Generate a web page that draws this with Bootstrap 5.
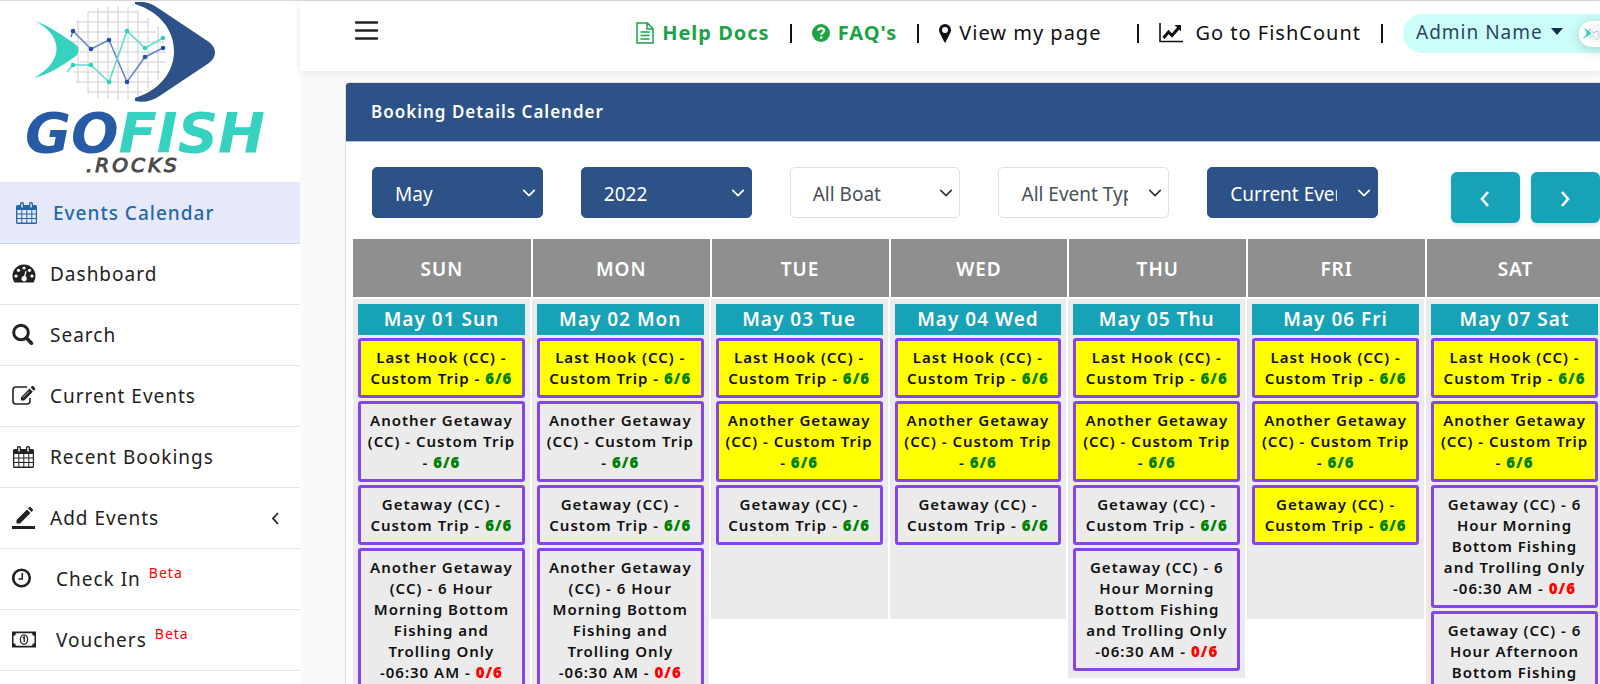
<!DOCTYPE html>
<html lang="en">
<head>
<meta charset="utf-8">
<meta name="viewport" content="width=device-width, initial-scale=1">
<title>Booking Details Calender</title>
<link rel="stylesheet" href="https://cdn.jsdelivr.net/npm/bootstrap@5.3.0/dist/css/bootstrap.min.css">
<style>
  :root { --navy: #2d5287; --teal: #17a2b8; --aqua: #35d2c2; }
  body { font-family: "Noto Sans", "Open Sans", sans-serif; font-size: 19px; letter-spacing: 1px; color: #222; background: #fafafa; overflow-x: hidden; }
  a { text-decoration: none; color: inherit; }
  .shell { border-top: 1px solid #d9d9d9; }
  .side { width: 300px; min-height: 100vh; background: #fff; }
  .brand { height: 182px; border-bottom: 1px solid #e6e6ea; }
  .brand svg { display: block; }
  .side-link { height: 61px; border-bottom: 1px solid #e4e4e4; padding-left: 12px; }
  .side-link svg { width: 24px; height: 24px; flex: none; margin-right: 14px; }
  .side-link.wide svg { margin-right: 20px; }
  .side-link.active { background: #e6e9fa; color: #2467a8; font-weight: 500; padding-left: 15px; border-color: #d3d7ea; }
  .side-link sup { color: #f00; font-size: 14px; top: -6px; margin-left: 8px; }
  .topbar { height: 70px; background: #fff; box-shadow: 0 2px 8px rgba(0,0,0,.08); padding-left: 54px; }
  .menu-btn { margin-bottom: 11px; }
  .top-links { color: #111; font-size: 20px; padding-bottom: 6px; }
  .help { color: #1ca345; font-weight: 700; }
  .sep { width: 2px; height: 19px; background: #111; margin: 0 20px; }
  .pill { width: 197px; height: 39px; border: 0; border-radius: 20px 0 0 20px; background: #ccfffa; color: #2b4560; font-size: 19px; letter-spacing: 1px; padding: 0 0 2px 13px; }
  .avatar { width: 44px; height: 26px; border-radius: 13px; background: #fff; box-shadow: 0 2px 14px rgba(0,0,0,.2); }
  .stage { padding: 11px 0 0 45px; margin-right: -14px; }
  .booking { border-radius: 4px; border-color: #dcdcdc; }
  .booking .card-header { background: var(--navy); color: #fff; font-size: 17px; font-weight: 600; line-height: 26px; padding: 16px 25px; border-radius: 3px 3px 0 0; border-bottom-color: #b5c3d8; }
  .booking .card-body { padding: 25px 7px 0; }
  .filters > div { padding: 0 19px; }
  .filters > .steps { padding: 5px 6px 0 0; gap: 11px; }
  .pick { height: 51px; font-size: 19px; padding: 3px 40px 0 22px; border-color: #dee2e6; color: #495057; border-radius: 5px; background-position: right 6px center; background-size: 14px 14px; }
  .pick.solid { color: #fff; background-color: var(--navy); border-color: var(--navy);
    background-image: url("data:image/svg+xml,%3csvg xmlns='http://www.w3.org/2000/svg' viewBox='0 0 16 16'%3e%3cpath fill='none' stroke='%23fff' stroke-linecap='round' stroke-linejoin='round' stroke-width='2' d='m2 5 6 6 6-6'/%3e%3c/svg%3e"); }
  .step { width: 69px; height: 51px; background: var(--teal); color: #fff; border: 0; border-radius: 6px; box-shadow: 0 2px 4px rgba(0,0,0,.12); }
  .cal { table-layout: fixed; margin-top: 16px; }
  .cal th { height: 59px; background: #8f8f8f; background-clip: padding-box; color: #fff; font-weight: 600; border-right: 2px solid #fff; border-bottom: 2px solid #fff; padding-top: 3px; }
  .cal td { vertical-align: top; padding: 0 2px 0 0; }
  .day { background: #ebebeb; min-height: 320px; padding: 5px 5px 7px; }
  .day h2 { background: var(--teal); color: #fff; font-size: 19px; font-weight: 600; line-height: 31px; margin: 0; }
  .ev { display: block; border: 3px solid #8545ea; border-radius: 3px; margin-top: 3px; padding: 6px 5px; font-size: 15px; font-weight: 600; line-height: 21px; color: #111; }
  .ev.hot { background: #ff0; }
  .ev b { font-weight: 900; color: #008000; }
  .ev b.none { color: #f00; }
</style>
</head>
<body>
<svg class="d-none">
  <symbol id="cal" viewBox="0 0 24 24"><path fill="currentColor" fill-rule="evenodd" d="M3 4h2V2.500a1.500 1.500 0 0 1 1.500-1.500h1a1.500 1.500 0 0 1 1.500 1.500V4h5V2.500A1.500 1.500 0 0 1 15.500 1h1A1.500 1.500 0 0 1 18 2.500V4h2.500A1.500 1.500 0 0 1 22 5.500v16a1.500 1.500 0 0 1-1.500 1.500h-18A1.500 1.500 0 0 1 1 21.500v-16A1.500 1.500 0 0 1 2.500 4zM2.300 9v3.600h4V9zm5 0v3.600h4V9zm5 0v3.600h4V9zm5 0v3.600h3.500V9zm-15 4.600v3.500h4v-3.500zm5 0v3.500h4v-3.500zm5 0v3.500h4v-3.500zm5 0v3.500h3.500v-3.500zm-15 4.500v3.500h4v-3.500zm5 0v3.500h4v-3.500zm5 0v3.500h4v-3.500zm5 0v3.500h3.500v-3.500zM6.300 2.500v4h1.400v-4zm9 0v4h1.400v-4z"/></symbol>
  <symbol id="fish" viewBox="0 0 190 105">
    <g fill="none" stroke="#dedee2" stroke-width="1.500"><path d="M44 18v62M54 10v82M64 6v90M74 5v92M84 4v94M94 5v92M104 8v86M114 16v70M124 24v54M54 10h50M42 20h72M38 30h84M36 40h94M46 50h86M46 60h86M40 70h86M42 80h76M54 90h54"/></g>
    <path d="M1 19c16 6 27 14 40 23 4 3 5 8 1 12C29 63 16 72 0 76c32-18 28-43 1-57z" fill="#35d2c2"/>
    <path d="M101 0c9-1 16 1 23 6l51 34c8 6 8 15 0 21l-51 34c-7 4-14 6-23 4v-3c52-16 52-78 0-94z" fill="#2d5287"/>
    <g fill="none" stroke-width="1.600"><path stroke="#6b85c4" d="M37 35l2-6 18 18 18-9 18 42 18-25 18-9"/><path stroke="#62dccf" d="M33 70l6-7h18l18 17 18-51 18 17 18-10"/></g>
    <g fill="#1d53a6"><circle cx="39" cy="29" r="2.300"/><circle cx="57" cy="47" r="2.300"/><circle cx="75" cy="38" r="2.300"/><circle cx="93" cy="80" r="2.300"/><circle cx="111" cy="55" r="2.300"/><circle cx="129" cy="46" r="2.300"/></g>
    <g fill="#2ed1c1"><circle cx="39" cy="63" r="2.300"/><circle cx="57" cy="63" r="2.300"/><circle cx="75" cy="80" r="2.300"/><circle cx="93" cy="29" r="2.300"/><circle cx="111" cy="46" r="2.300"/><circle cx="129" cy="36" r="2.300"/></g>
  </symbol>
</svg>

<div class="shell d-flex">
  <nav class="side flex-shrink-0" aria-label="Main">
    <a class="brand d-block" href="#" aria-label="GoFish.Rocks">
      <svg width="300" height="178" viewBox="0 0 300 178">
        <use href="#fish" x="34" y="1" width="190" height="105"/>
        <g font-family="DejaVu Sans" font-style="italic">
          <text x="25" y="151" font-size="56" font-weight="700" letter-spacing="0" fill="#285ba6">GO<tspan fill="#35d2c2">FISH</tspan></text>
          <text x="86" y="171" font-size="20" letter-spacing="3" fill="#4a4a4a" stroke="#4a4a4a">.ROCKS</text>
        </g>
      </svg>
    </a>
    <a class="side-link active d-flex align-items-center" href="#"><svg><use href="#cal"/></svg>Events Calendar</a>
    <a class="side-link d-flex align-items-center" href="#">
      <svg viewBox="0 0 24 24"><path fill="#222" d="M12 2.500A11.500 11.500 0 0 0 .5 14c0 2.300.7 4.400 1.800 6.200.2.300.4.300.7.300h18c.3 0 .5 0 .7-.3a11.500 11.500 0 0 0 1.800-6.200A11.500 11.500 0 0 0 12 2.500z"/><g fill="#fff"><circle cx="4" cy="14" r="1.600"/><circle cx="6.500" cy="8.300" r="1.600"/><circle cx="12" cy="6" r="1.600"/><circle cx="17.500" cy="8.300" r="1.600"/><circle cx="20" cy="14" r="1.600"/><path d="M13.400 9l1.200.3-1.200 5a2.700 2.700 0 1 1-1.300-.3z"/></g></svg>Dashboard</a>
    <a class="side-link d-flex align-items-center" href="#">
      <svg viewBox="0 0 24 24" fill="none" stroke="#222"><circle cx="9" cy="9.500" r="7.300" stroke-width="3"/><path d="M14.500 15l5 5.200" stroke-width="3.600" stroke-linecap="round"/></svg>Search</a>
    <a class="side-link d-flex align-items-center" href="#">
      <svg viewBox="0 0 24 24"><path fill="none" stroke="#222" stroke-width="1.600" d="M15 3H4a3 3 0 0 0-3 3v11a3 3 0 0 0 3 3h11a3 3 0 0 0 3-3v-3"/><path fill="#222" d="M17.500 4.500l3.300 3.300-8.600 8.700H9v-3.300zM18.500 3.500l1-1c.6-.6 1.400-.6 2 0l1.300 1.300c.6.600.6 1.400 0 2l-1 1z"/><path d="M11 13.500l6-6" stroke="#fff" stroke-width=".8"/></svg>Current Events</a>
    <a class="side-link d-flex align-items-center" href="#"><svg><use href="#cal"/></svg>Recent Bookings</a>
    <a class="side-link d-flex align-items-center" href="#">
      <svg viewBox="0 0 24 24" fill="#222"><path d="M0 20h23v3H0zM15 3.500l3.500 3.500L8 17.500H4.500V14zM16 2.500l1.200-1.200c.5-.5 1-.5 1.500 0l2 2c.5.500.5 1 0 1.500L19.500 6z"/></svg>Add Events
      <svg class="ms-auto" viewBox="0 0 24 24" fill="none" stroke="#222" stroke-width="1.800"><path d="M16 7l-5 5.500 5 5.500"/></svg></a>
    <a class="side-link wide d-flex align-items-center" href="#">
      <svg viewBox="0 0 24 24" fill="none" stroke="#222"><circle cx="9.500" cy="11" r="8.300" stroke-width="2.600"/><path d="M10.300 6v6H6.500" stroke-width="1.500"/></svg>Check In<sup>Beta</sup></a>
    <a class="side-link wide d-flex align-items-center" href="#">
      <svg viewBox="0 0 24 24"><path fill="#222" fill-rule="evenodd" d="M0 3.500h24v16H0zM4 5.200A3 3 0 0 1 1.500 8v7A3 3 0 0 1 4 17.800h16a3 3 0 0 1 2.500-2.800V8A3 3 0 0 1 20 5.200z"/><ellipse cx="12" cy="11.500" rx="3.600" ry="4.700" fill="none" stroke="#222" stroke-width="1.300"/><path d="M10.800 9.800l1.400-.8v5" fill="none" stroke="#222" stroke-width="1.400"/></svg>Vouchers<sup>Beta</sup></a>
  </nav>

  <div class="flex-grow-1" style="min-width:0">
    <header class="topbar d-flex align-items-center">
      <button class="menu-btn btn p-0 border-0" type="button" aria-label="Toggle menu"><svg class="d-block" width="25" height="22" stroke="#222" stroke-width="2.400" stroke-linecap="round"><path d="M2 2.500h21M2 10.500h21M2 18.500h21"/></svg></button>
      <div class="top-links d-flex align-items-center ms-auto text-nowrap">
        <a class="help d-flex align-items-center gap-2" href="#"><svg width="18" height="22" viewBox="0 0 18 22" fill="none" stroke="#1ca345" stroke-width="1.500"><path d="M1 1h10.500L17 6.500V21H1zM11 1v6h6M4.500 10h9M4.500 13.500h9M4.500 17h9"/></svg>Help Docs</a>
        <span class="sep"></span>
        <a class="help d-flex align-items-center gap-2" href="#"><svg width="18" height="18" viewBox="0 0 18 18"><circle cx="9" cy="9" r="9" fill="#1ca345"/><path d="M6 6.800C6.500 3.500 12 3.700 12 6.800c0 2-2.800 2-2.800 4" fill="none" stroke="#fff" stroke-width="2.200"/><path d="M8 12.400h2.400v2.300H8z" fill="#fff"/></svg>FAQ's</a>
        <span class="sep"></span>
        <a class="d-flex align-items-center gap-2 me-3" href="#"><svg width="12" height="19" viewBox="0 0 12 19"><path fill="#111" fill-rule="evenodd" d="M6 0a6 6 0 0 1 6 6c0 2-1 3.500-2 5.500L6.700 18c-.3.700-1.100.700-1.400 0L2 11.500C1 9.500 0 8 0 6a6 6 0 0 1 6-6zm0 3a3 3 0 1 0 0 6 3 3 0 0 0 0-6z"/></svg>View my page</a>
        <span class="sep"></span>
        <a class="d-flex align-items-center gap-2" href="#"><svg class="me-1" width="24" height="20" viewBox="0 0 24 20" fill="none" stroke="#111"><path d="M1 0v18.500h23" stroke-width="1.600"/><path d="M4.500 15l5-6 3.500 3.500 7-8" stroke-width="3"/><path d="M15.500 2H22v6.500z" fill="#111" stroke="none"/></svg>Go to FishCount</a>
        <span class="sep"></span>
        <button class="pill d-flex align-items-center text-nowrap" type="button">Admin Name<svg class="ms-2 flex-shrink-0" width="12" height="8"><path d="M0 0h12L6 7z" fill="#10304f"/></svg><span class="avatar d-flex flex-shrink-0 align-items-center justify-content-center ms-3 mt-1"><svg width="38" height="22"><use href="#fish"/></svg></span></button>
      </div>
    </header>

    <main class="stage">
      <section class="card booking">
        <h1 class="card-header m-0">Booking Details Calender</h1>
        <div class="card-body">
          <form class="filters row g-0">
            <div class="col-2"><select class="form-select pick solid" aria-label="Month"><option>May</option></select></div>
            <div class="col-2"><select class="form-select pick solid" aria-label="Year"><option>2022</option></select></div>
            <div class="col-2"><select class="form-select pick" aria-label="Boat"><option>All Boat</option></select></div>
            <div class="col-2"><select class="form-select pick" aria-label="Event type"><option>All Event Types</option></select></div>
            <div class="col-2"><select class="form-select pick solid" aria-label="Events shown"><option>Current Events</option></select></div>
            <div class="steps col-2 d-flex justify-content-end">
              <button class="step" type="button" aria-label="Previous month"><svg width="12" height="18" fill="none" stroke="#fff" stroke-width="2.600"><path d="M9 2L3 9l6 7"/></svg></button>
              <button class="step" type="button" aria-label="Next month"><svg width="12" height="18" fill="none" stroke="#fff" stroke-width="2.600"><path d="M3 2l6 7-6 7"/></svg></button>
            </div>
          </form>
          <table class="cal w-100 text-center">
            <thead><tr><th>SUN</th><th>MON</th><th>TUE</th><th>WED</th><th>THU</th><th>FRI</th><th>SAT</th></tr></thead>
            <tbody><tr>
              <td><div class="day"><h2>May 01 Sun</h2>
                <a href="#" class="ev hot">Last Hook (CC) - Custom Trip - <b>6/6</b></a>
                <a href="#" class="ev">Another Getaway (CC) - Custom Trip - <b>6/6</b></a>
                <a href="#" class="ev">Getaway (CC) - Custom Trip - <b>6/6</b></a>
                <a href="#" class="ev">Another Getaway (CC) - 6 Hour Morning Bottom Fishing and Trolling Only -06:30 AM - <b class="none">0/6</b></a></div></td>
              <td><div class="day"><h2>May 02 Mon</h2>
                <a href="#" class="ev hot">Last Hook (CC) - Custom Trip - <b>6/6</b></a>
                <a href="#" class="ev">Another Getaway (CC) - Custom Trip - <b>6/6</b></a>
                <a href="#" class="ev">Getaway (CC) - Custom Trip - <b>6/6</b></a>
                <a href="#" class="ev">Another Getaway (CC) - 6 Hour Morning Bottom Fishing and Trolling Only -06:30 AM - <b class="none">0/6</b></a></div></td>
              <td><div class="day"><h2>May 03 Tue</h2>
                <a href="#" class="ev hot">Last Hook (CC) - Custom Trip - <b>6/6</b></a>
                <a href="#" class="ev hot">Another Getaway (CC) - Custom Trip - <b>6/6</b></a>
                <a href="#" class="ev">Getaway (CC) - Custom Trip - <b>6/6</b></a></div></td>
              <td><div class="day"><h2>May 04 Wed</h2>
                <a href="#" class="ev hot">Last Hook (CC) - Custom Trip - <b>6/6</b></a>
                <a href="#" class="ev hot">Another Getaway (CC) - Custom Trip - <b>6/6</b></a>
                <a href="#" class="ev">Getaway (CC) - Custom Trip - <b>6/6</b></a></div></td>
              <td><div class="day"><h2>May 05 Thu</h2>
                <a href="#" class="ev hot">Last Hook (CC) - Custom Trip - <b>6/6</b></a>
                <a href="#" class="ev hot">Another Getaway (CC) - Custom Trip - <b>6/6</b></a>
                <a href="#" class="ev">Getaway (CC) - Custom Trip - <b>6/6</b></a>
                <a href="#" class="ev">Getaway (CC) - 6 Hour Morning Bottom Fishing and Trolling Only -06:30 AM - <b class="none">0/6</b></a></div></td>
              <td><div class="day"><h2>May 06 Fri</h2>
                <a href="#" class="ev hot">Last Hook (CC) - Custom Trip - <b>6/6</b></a>
                <a href="#" class="ev hot">Another Getaway (CC) - Custom Trip - <b>6/6</b></a>
                <a href="#" class="ev hot">Getaway (CC) - Custom Trip - <b>6/6</b></a></div></td>
              <td><div class="day"><h2>May 07 Sat</h2>
                <a href="#" class="ev hot">Last Hook (CC) - Custom Trip - <b>6/6</b></a>
                <a href="#" class="ev hot">Another Getaway (CC) - Custom Trip - <b>6/6</b></a>
                <a href="#" class="ev">Getaway (CC) - 6 Hour Morning Bottom Fishing and Trolling Only -06:30 AM - <b class="none">0/6</b></a>
                <a href="#" class="ev">Getaway (CC) - 6 Hour Afternoon Bottom Fishing</a></div></td>
            </tr></tbody>
          </table>
        </div>
      </section>
    </main>
  </div>
</div>
<script src="https://cdn.jsdelivr.net/npm/bootstrap@5.3.0/dist/js/bootstrap.bundle.min.js"></script>
</body>
</html>
